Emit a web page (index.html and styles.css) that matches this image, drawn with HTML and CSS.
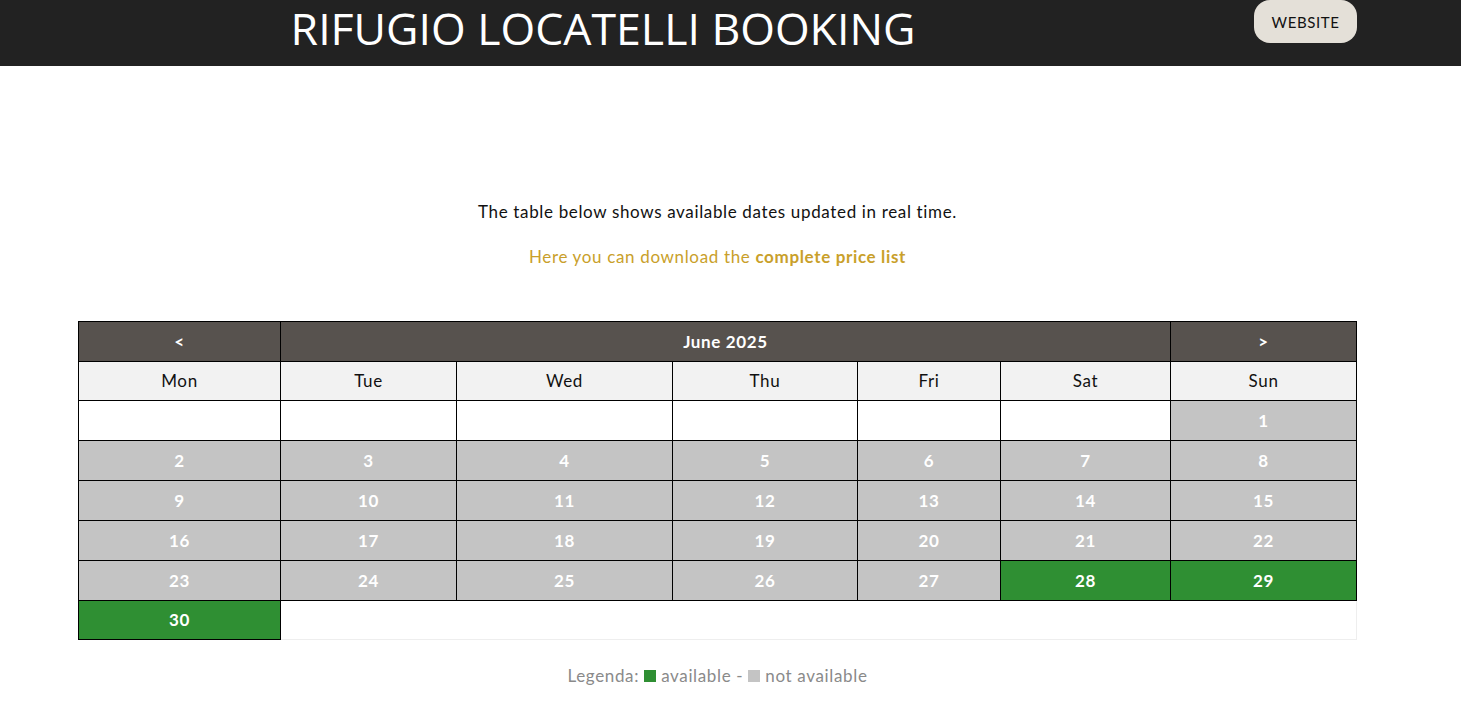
FILE: index.html
```html
<!DOCTYPE html>
<html>
<head>
<meta charset="utf-8">
<link rel="stylesheet" href="styles.css">
</head>
<body>
<header class="topbar">
  <div class="title-wrap"><h1 class="title">RIFUGIO LOCATELLI BOOKING</h1></div>
  <a class="website-btn" href="#">WEBSITE</a>
</header>
<main class="content">
  <p class="intro">The table below shows available dates updated in real time.</p>
  <p class="prices">Here you can download the <strong>complete price list</strong></p>
  <table class="cal">
    <colgroup>
      <col class="c-mon"><col class="c-tue"><col class="c-wed"><col class="c-thu"><col class="c-fri"><col class="c-sat"><col class="c-sun">
    </colgroup>
    <thead>
      <tr class="nav-row">
        <th class="nav">&lt;</th>
        <th class="nav" colspan="5">June 2025</th>
        <th class="nav">&gt;</th>
      </tr>
      <tr class="dow-row">
        <th>Mon</th><th>Tue</th><th>Wed</th><th>Thu</th><th>Fri</th><th>Sat</th><th>Sun</th>
      </tr>
    </thead>
    <tbody>
      <tr><td class="empty"></td><td class="empty"></td><td class="empty"></td><td class="empty"></td><td class="empty"></td><td class="empty"></td><td class="na">1</td></tr>
      <tr><td class="na">2</td><td class="na">3</td><td class="na">4</td><td class="na">5</td><td class="na">6</td><td class="na">7</td><td class="na">8</td></tr>
      <tr><td class="na">9</td><td class="na">10</td><td class="na">11</td><td class="na">12</td><td class="na">13</td><td class="na">14</td><td class="na">15</td></tr>
      <tr><td class="na">16</td><td class="na">17</td><td class="na">18</td><td class="na">19</td><td class="na">20</td><td class="na">21</td><td class="na">22</td></tr>
      <tr><td class="na">23</td><td class="na">24</td><td class="na">25</td><td class="na">26</td><td class="na">27</td><td class="av">28</td><td class="av">29</td></tr>
      <tr class="last-row"><td class="av">30</td><td class="filler" colspan="6"></td></tr>
    </tbody>
  </table>
  <p class="legend">Legenda: <span class="sw sw-av"></span> available - <span class="sw sw-na"></span> not available</p>
</main>
</body>
</html>
```
FILE: styles.css
```css
html, body { margin: 0; padding: 0; background: #fff; }
body { font-family: "Lato", "Noto Sans", sans-serif; color: #111; }

.topbar {
  background: #222222;
  height: 66px;
  display: flex;
  align-items: flex-start;
}
.title-wrap {
  width: 1206px;
  display: flex;
  justify-content: center;
}
.title {
  margin: 0;
  font-family: "Open Sans", sans-serif;
  font-weight: 400;
  font-size: 44.6px;
  line-height: 56px;
  color: #fff;
}
.website-btn {
  margin-left: 48px;
  width: 103px;
  height: 43px;
  background: #e4e0d8;
  border-radius: 16px;
  color: #111;
  text-decoration: none;
  font-size: 15px;
  letter-spacing: 0.6px;
  display: flex;
  align-items: center;
  justify-content: center;
}

.content {
  padding: 0 104px 0 78px;
  display: flex;
  flex-direction: column;
  align-items: center;
  font-size: 17px;
  letter-spacing: 0.65px;
}
.intro {
  margin: 136px 0 0;
  line-height: 20px;
  color: #111;
}
.prices {
  margin: 25px 0 0;
  line-height: 20px;
  color: #c9a02a;
}
.prices strong { font-weight: 700; }

.cal {
  margin-top: 54px;
  width: 1278px;
  border-collapse: collapse;
  table-layout: fixed;
  line-height: 20px;
}
.c-mon { width: 202px; }
.c-tue { width: 176px; }
.c-wed { width: 216px; }
.c-thu { width: 185px; }
.c-fri { width: 143px; }
.c-sat { width: 170px; }
.c-sun { width: 186px; }

.cal th, .cal td {
  border: 1px solid #000;
  height: 39px;
  padding: 0;
  text-align: center;
}
.dow-row th { height: 38px; }
.last-row td { height: 38px; }
.nav-row th {
  background: #57524e;
  color: #fff;
  font-weight: 700;
}
.dow-row th {
  background: #f2f2f2;
  color: #111;
  font-weight: 400;
}
.cal td { color: #fff; font-weight: 700; }
.cal td.empty { background: #fff; }
.cal td.na { background: #c4c4c4; }
.cal td.av { background: #2f8f33; }
.cal td.filler { background: #fff; border-color: #eeeeee; border-left-color: #000; }

.legend {
  margin: 25px 0 0;
  color: #8a8a8a;
}
.sw {
  display: inline-block;
  width: 12px;
  height: 12px;
  vertical-align: 0px;
}
.sw-av { background: #2f8f33; }
.sw-na { background: #c4c4c4; }
```
